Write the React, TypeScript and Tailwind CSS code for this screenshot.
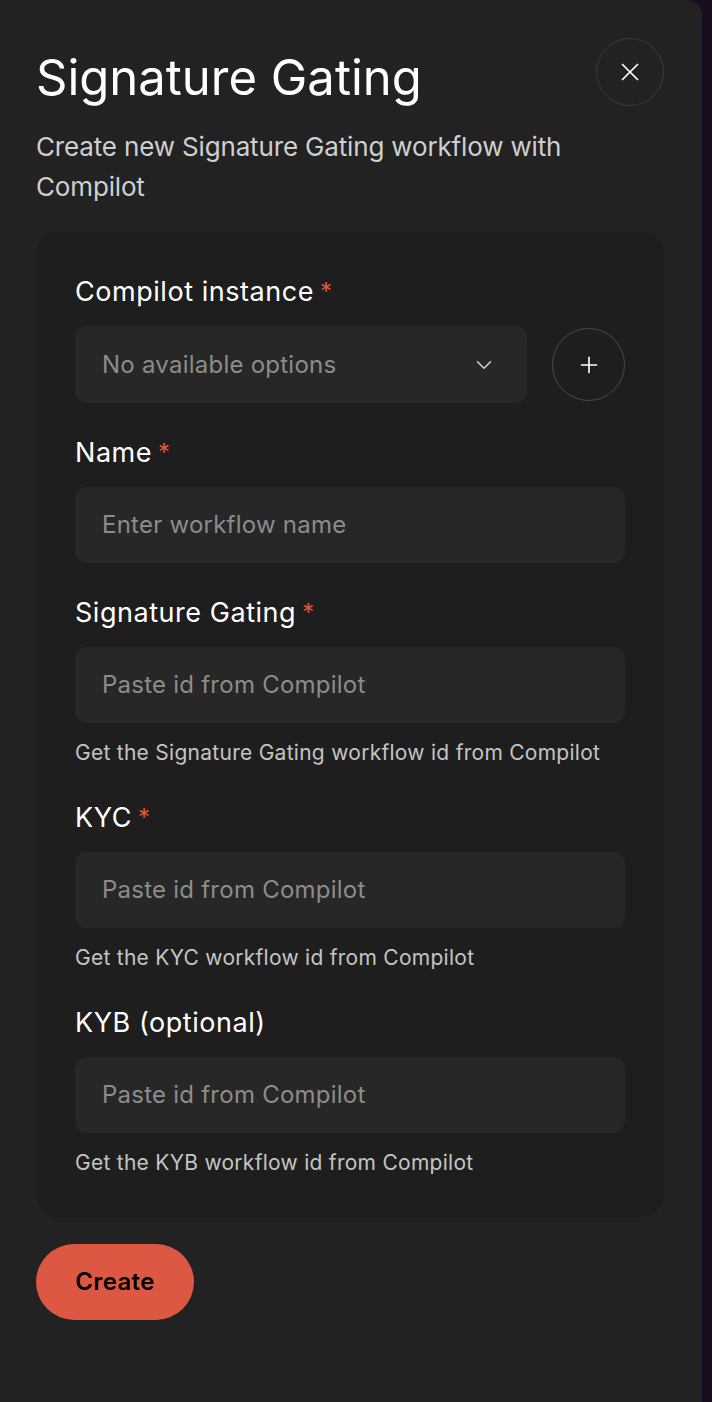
import { ChevronDown, Plus, X } from 'lucide-react'

const font = { fontFamily: 'Inter, "Noto Sans", sans-serif' }

function Label({ text, required }: { text: string; required?: boolean }) {
  return (
    <div className="h-[40px] flex items-center text-[27px] text-white tracking-[0.02em]">
      <span>{text}</span>
      {required && <span className="ml-[6px] text-[#dc5842] self-start mt-[2px] text-[24px]">*</span>}
    </div>
  )
}

function TextField({
  label,
  placeholder,
  required,
  helper,
}: {
  label: string
  placeholder: string
  required?: boolean
  helper?: string
}) {
  return (
    <div className="flex flex-col">
      <Label text={label} required={required} />
      <div className="mt-[14px] h-[76px] rounded-[12px] bg-[#272727] flex items-center px-[27px]">
        <span className="text-[24px] text-[#8c8c8c] tracking-[0.01em]">{placeholder}</span>
      </div>
      {helper && (
        <p className="mt-[15px] h-[30px] leading-[30px] text-[21px] text-[#c4c4c4] tracking-[0.013em]">
          {helper}
        </p>
      )}
    </div>
  )
}

export default function App() {
  return (
    <div className="w-[712px] h-[1402px] bg-[#1a0d1f] flex" style={font}>
      <div className="w-[702px] h-full bg-[#222222] rounded-tr-[16px] flex flex-col pl-[36px] pr-[38px]">
        {/* Header */}
        <div className="flex items-start justify-between pt-[38px]">
          <h1 className="mt-[10px] text-[49px] leading-[60px] text-white">Signature Gating</h1>
          <button className="w-[68px] h-[68px] rounded-full border border-[#3a3a3a] flex items-center justify-center text-white">
            <X size={30} strokeWidth={1.4} />
          </button>
        </div>
        <p className="mt-[19px] text-[26px] leading-[40px] text-[#cfcfcf] tracking-[-0.006em] pr-[80px]">
          Create new Signature Gating workflow with Compilot
        </p>

        {/* Form card */}
        <div className="mt-[24px] rounded-[24px] bg-[#1e1e1e] px-[39px] pt-[41px] pb-[40px] flex flex-col gap-[30px]">
          <div className="flex flex-col">
            <Label text="Compilot instance" required />
            <div className="mt-[14px] flex items-center gap-[25px]">
              <div className="flex-1 h-[77px] rounded-[12px] bg-[#272727] flex items-center justify-between pl-[27px] pr-[30px]">
                <span className="text-[24px] text-[#8c8c8c] tracking-[0.01em]">No available options</span>
                <ChevronDown size={26} strokeWidth={1.5} className="text-[#cfcfcf]" />
              </div>
              <button className="w-[73px] h-[73px] rounded-full border border-[#4a4a4a] flex items-center justify-center text-white">
                <Plus size={26} strokeWidth={1.5} />
              </button>
            </div>
          </div>
          <TextField label="Name" placeholder="Enter workflow name" required />
          <TextField
            label="Signature Gating"
            placeholder="Paste id from Compilot"
            required
            helper="Get the Signature Gating workflow id from Compilot"
          />
          <TextField
            label="KYC"
            placeholder="Paste id from Compilot"
            required
            helper="Get the KYC workflow id from Compilot"
          />
          <TextField
            label="KYB (optional)"
            placeholder="Paste id from Compilot"
            helper="Get the KYB workflow id from Compilot"
          />
        </div>

        <div className="mt-[26px]">
          <button className="h-[76px] w-[158px] rounded-full bg-[#dc5842] text-black text-[24px] font-semibold tracking-[0.015em]">
            Create
          </button>
        </div>
      </div>
    </div>
  )
}
